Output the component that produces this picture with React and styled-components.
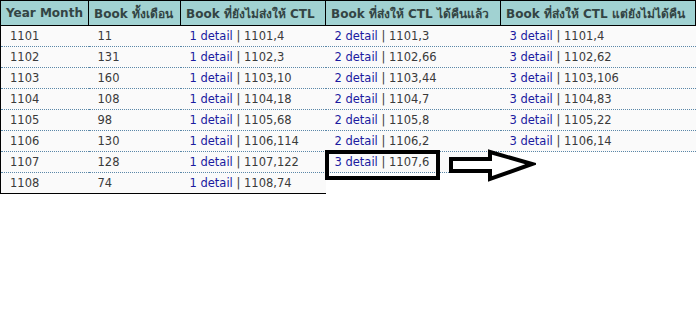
import React from 'react';
import styled, { createGlobalStyle } from 'styled-components';

const GlobalStyle = createGlobalStyle`
    html, body {
        margin: 0;
        padding: 0;
        background: #fff;
    }
    body {
        font-family: "DejaVu Sans", Verdana, "Noto Sans", sans-serif;
    }
`;

const rows = [
    ['1101', '11', '1101,4', '1101,3', '1101,4'],
    ['1102', '131', '1102,3', '1102,66', '1102,62'],
    ['1103', '160', '1103,10', '1103,44', '1103,106'],
    ['1104', '108', '1104,18', '1104,7', '1104,83'],
    ['1105', '98', '1105,68', '1105,8', '1105,22'],
    ['1106', '130', '1106,114', '1106,2', '1106,14'],
    ['1107', '128', '1107,122', '1107,6', null],
    ['1108', '74', '1108,74', null, null],
];

const headers = [
    { label: 'Year Month', width: 88 },
    { label: 'Book ทั้งเดือน', width: 92 },
    { label: 'Book ที่ยังไม่ส่งให้ CTL', width: 145 },
    { label: 'Book ที่ส่งให้ CTL ได้คืนแล้ว', width: 175 },
    { label: 'Book ที่ส่งให้ CTL แต่ยังไม่ได้คืน', width: 195 },
];

const Detail = ({ n, value }) => (
    <>
        <DetailLink href="#">{n} detail</DetailLink> | {value}
    </>
);

const App = function () {
    return (
        <Wrap>
            <GlobalStyle/>
            <Table>
                <colgroup>
                    {headers.map(h => <col key={h.label} style={{ width: h.width }}/>)}
                </colgroup>
                <thead>
                    <tr>
                        {headers.map(h => <Th key={h.label}>{h.label}</Th>)}
                    </tr>
                </thead>
                <tbody>
                    {rows.map((r, i) => {
                        const last = i === rows.length - 1;
                        return (
                            <tr key={r[0]}>
                                <Td first last={last}>{r[0]}</Td>
                                <Td last={last}>{r[1]}</Td>
                                <Td last={last}><Detail n={1} value={r[2]}/></Td>
                                {r[3] ? <Td><Detail n={i === 6 ? 3 : 2} value={r[3]}/></Td> : <Blank/>}
                                {r[4] ? <Td><Detail n={3} value={r[4]}/></Td> : <Blank/>}
                            </tr>
                        );
                    })}
                </tbody>
            </Table>

            <Highlight/>
            <Arrow width="88" height="34" viewBox="0 0 88 34">
                <path d="M3 10 H42 V3 L84 15 L42 30 V22 H3 Z"
                      fill="#fff" stroke="#000" strokeWidth="4" strokeLinejoin="miter"/>
            </Arrow>
        </Wrap>
    );
};

export default App;

const Wrap = styled.div`
    position: relative;
    width: 697px;
    height: 328px;
`;

const Table = styled.table`
    border-collapse: collapse;
    table-layout: fixed;
    width: 695px;
    font-size: 11.5px;
    color: #3a3a3a;
`;

const Th = styled.th`
    height: 24px;
    padding: 0 5px;
    background: #a1d2d2;
    color: #334444;
    font-size: 12px;
    font-weight: bold;
    text-align: left;
    white-space: nowrap;
    border: 1px solid #000;
`;

const Td = styled.td`
    height: 20px;
    padding: 0 0 0 9px;
    background: #fafafa;
    white-space: nowrap;
    border-bottom: ${p => p.last ? '1px solid #000' : '1px dotted #5a87a8'};
    border-left: ${p => p.first ? '1px solid #000' : 'none'};
`;

const Blank = styled.td`
    background: #fff;
    border: none;
`;

const DetailLink = styled.a`
    color: #1b1ba0;
    text-decoration: none;
`;

const Highlight = styled.div`
    position: absolute;
    left: 325px;
    top: 150px;
    width: 107px;
    height: 22px;
    border: 4px solid #000;
`;

const Arrow = styled.svg`
    position: absolute;
    left: 448px;
    top: 149px;
`;
